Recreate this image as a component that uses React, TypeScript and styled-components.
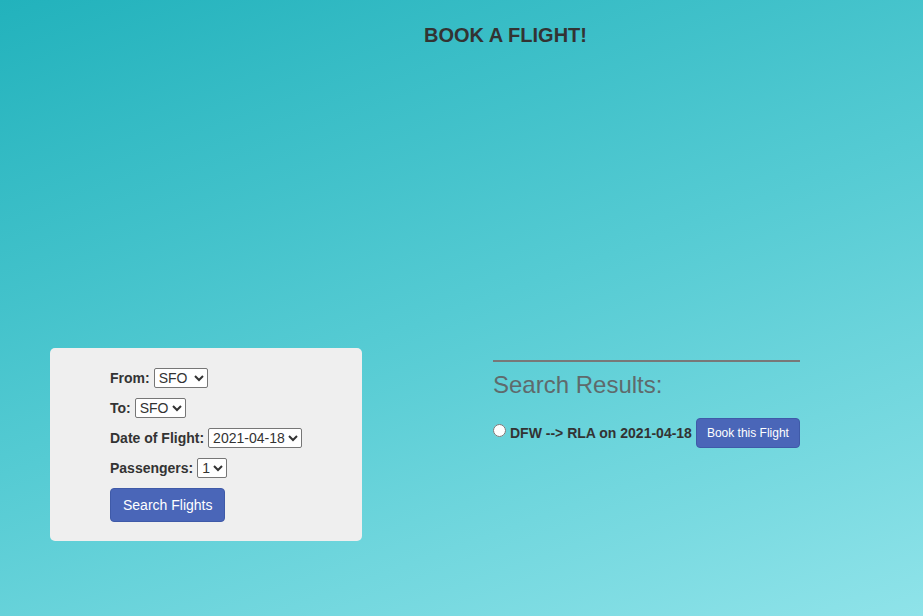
import styled, { createGlobalStyle } from "styled-components";

const GlobalStyle = createGlobalStyle`
  html, body {
    margin: 0;
    padding: 0;
  }
  body {
    font-family: "Liberation Sans", Arial, sans-serif;
    color: #333;
    background: linear-gradient(160deg, #22b2bc 0%, #55cbd3 50%, #8fe3e9 100%);
    min-height: 616px;
  }
`;

const Page = styled.div`
  min-height: 616px;
`;

const Title = styled.h1`
  margin: 0;
  padding: 24px 0 0 88px;
  font-size: 20px;
  line-height: 23px;
  font-weight: 700;
  text-align: center;
  color: #333;
`;

const Main = styled.div`
  display: flex;
  align-items: flex-start;
  gap: 131px;
  padding: 301px 0 0 50px;
`;

const Panel = styled.form`
  width: 312px;
  box-sizing: border-box;
  background: #efefef;
  border-radius: 5px;
  padding: 20px 0 19px 60px;
  display: flex;
  flex-direction: column;
  gap: 10px;
`;

const Field = styled.label`
  display: flex;
  align-items: center;
  gap: 4px;
  height: 20px;
  font-size: 14px;
  font-weight: 700;
  color: #333;
`;

const Select = styled.select`
  font-family: "Liberation Sans", Arial, sans-serif;
  font-size: 14px;
  height: 20px;
  padding: 0;
  color: #333;
  background: #fff;
  border: 1px solid #767676;
  border-radius: 2px;
`;

const Button = styled.button<{ $small?: boolean }>`
  align-self: flex-start;
  font-family: "Liberation Sans", Arial, sans-serif;
  font-size: ${(p) => (p.$small ? "12px" : "14px")};
  height: ${(p) => (p.$small ? "30px" : "34px")};
  padding: ${(p) => (p.$small ? "0 10px" : "0 12px")};
  background: #4a66b8;
  color: #fff;
  border: 1px solid #3f5aa8;
  border-radius: 4px;
  cursor: pointer;
`;

const Results = styled.section`
  width: 307px;
  padding-top: 12px;
`;

const Rule = styled.hr`
  margin: 0;
  border: none;
  border-top: 2px solid #787878;
`;

const ResultsTitle = styled.h2`
  margin: 9px 0 0;
  font-size: 24px;
  line-height: 28px;
  font-weight: 400;
  color: #5f6a6c;
`;

const ResultRow = styled.div`
  display: flex;
  align-items: center;
  margin-top: 19px;
  font-size: 14px;
  font-weight: 700;
  color: #333;
`;

const Radio = styled.input`
  margin: 0 4px 5px 0;
  width: 13px;
  height: 13px;
`;

const ResultText = styled.span`
  margin-right: 4px;
`;

export default function App() {
  return (
    <Page>
      <GlobalStyle />
      <Title>BOOK A FLIGHT!</Title>
      <Main>
        <Panel onSubmit={(e) => e.preventDefault()}>
          <Field>
            From:
            <Select defaultValue="SFO">
              <option>SFO</option>
              <option>DFW</option>
            </Select>
          </Field>
          <Field>
            To:
            <Select defaultValue="SFO">
              <option>SFO</option>
              <option>RLA</option>
            </Select>
          </Field>
          <Field>
            Date of Flight:
            <Select defaultValue="2021-04-18">
              <option>2021-04-18</option>
            </Select>
          </Field>
          <Field>
            Passengers:
            <Select defaultValue="1">
              <option>1</option>
              <option>2</option>
            </Select>
          </Field>
          <Button type="submit">Search Flights</Button>
        </Panel>
        <Results>
          <Rule />
          <ResultsTitle>Search Results:</ResultsTitle>
          <ResultRow>
            <Radio type="radio" name="flight" />
            <ResultText>DFW --&gt; RLA on 2021-04-18</ResultText>
            <Button $small type="button">Book this Flight</Button>
          </ResultRow>
        </Results>
      </Main>
    </Page>
  );
}
